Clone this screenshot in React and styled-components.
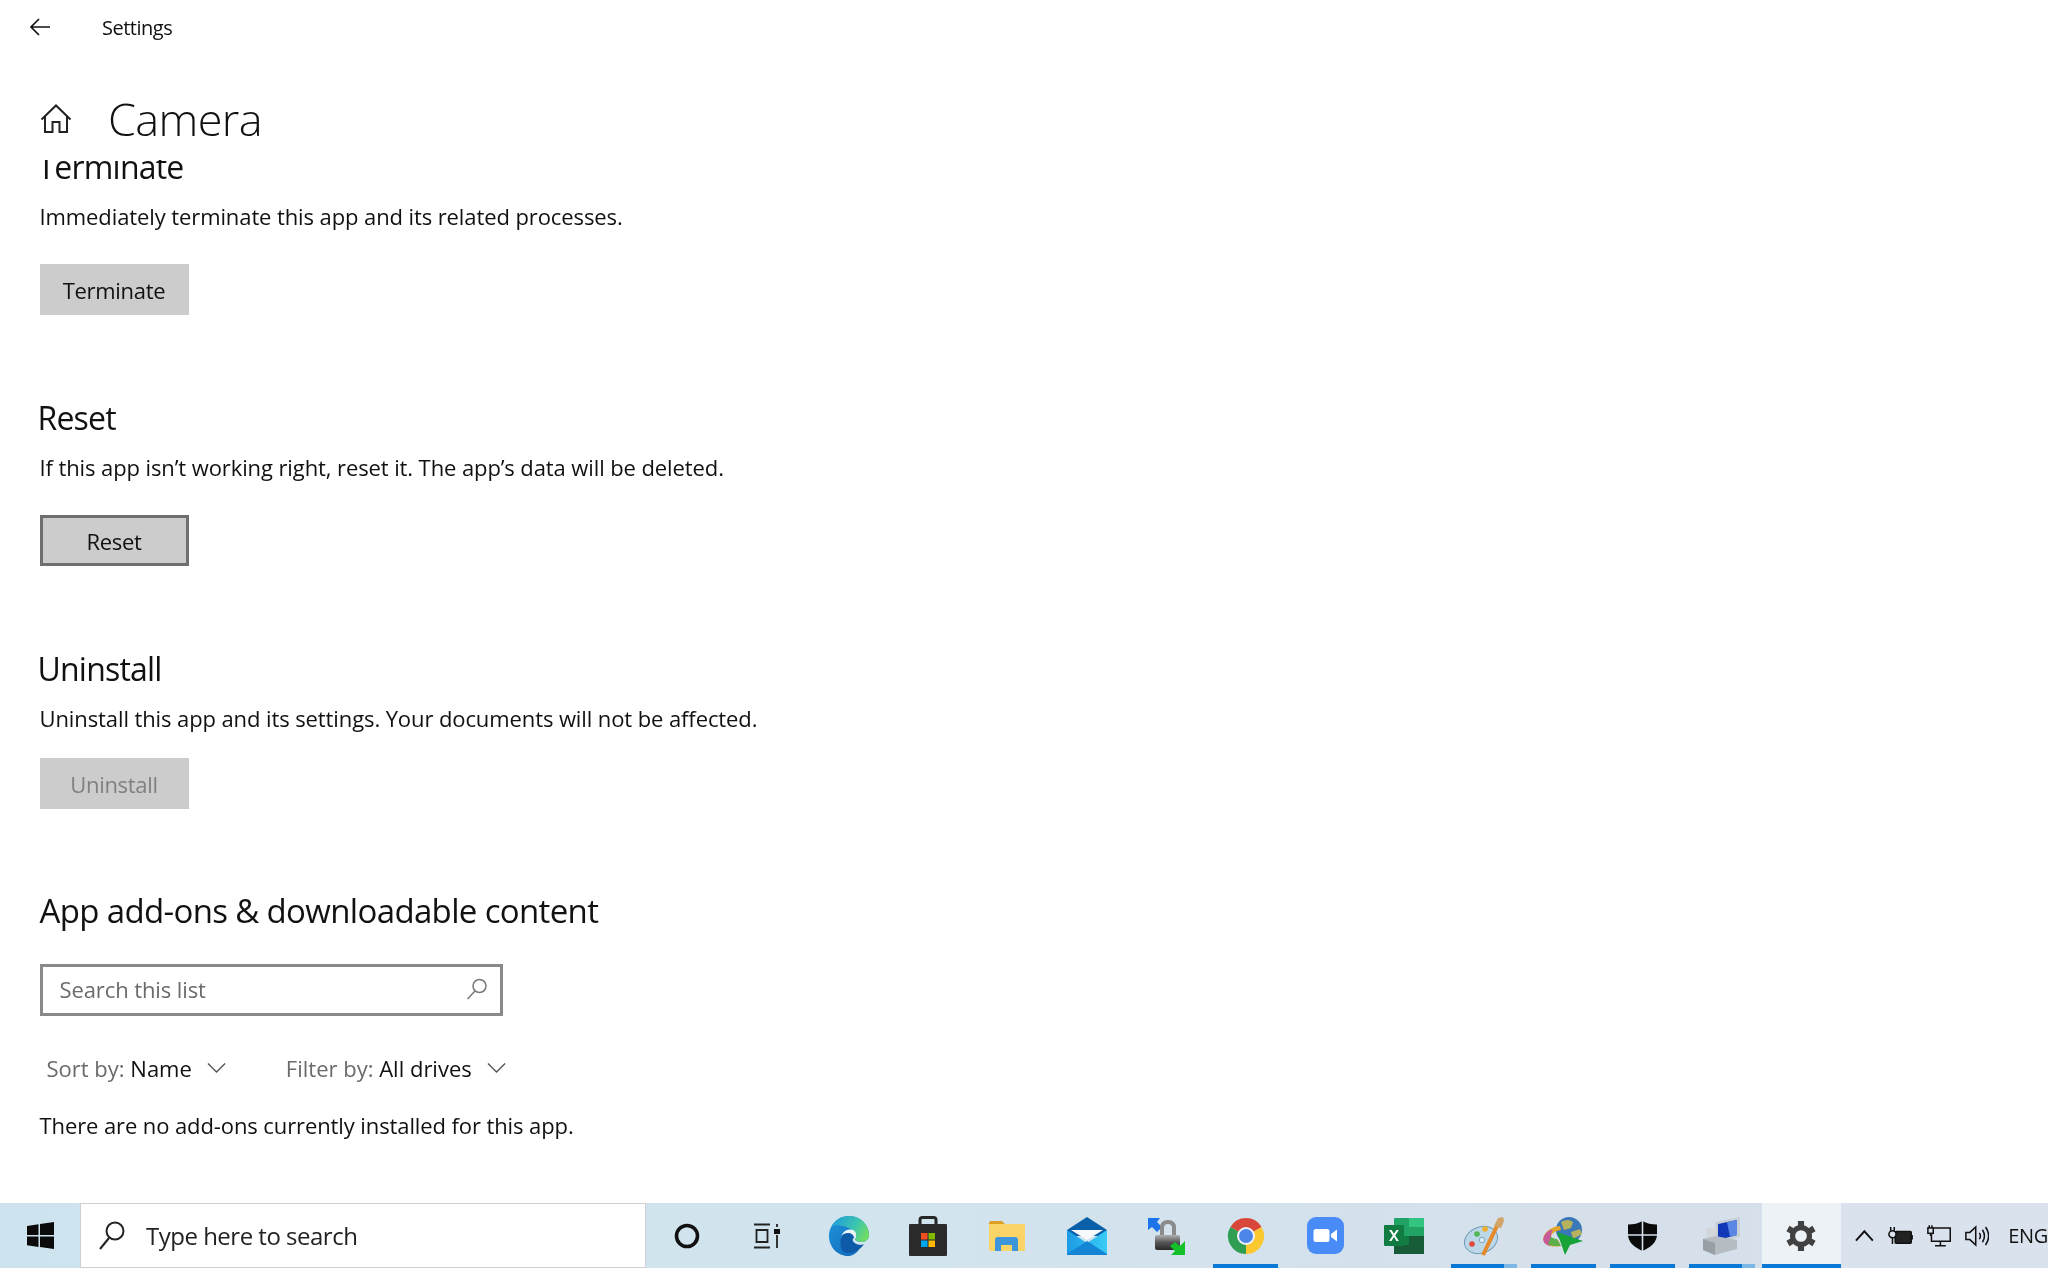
import React from 'react';
import styled, { createGlobalStyle } from 'styled-components';

const GlobalStyle = createGlobalStyle`
  html, body { margin: 0; padding: 0; background: #fff; }
  body { font-family: "Open Sans", "Noto Sans", sans-serif; color: #111; }
`;

const Page = styled.div`
  height: 1268px;
  display: flex;
  flex-direction: column;
  overflow: hidden;
  filter: blur(0.4px);
`;

const TitleBar = styled.div`
  height: 54px;
  display: flex;
  align-items: center;
  padding-left: 29px;
  gap: 51px;
  font-size: 20px;
  letter-spacing: -0.5px;
`;

const PageHeader = styled.div`
  height: 106px;
  box-sizing: border-box;
  display: flex;
  align-items: center;
  padding: 23px 0 0 40px;
  gap: 36px;
`;

const PageTitle = styled.h1`
  margin: 0;
  font-size: 45px;
  font-weight: 300;
  letter-spacing: -0.6px;
`;

const ScrollArea = styled.div`
  flex: 1;
  overflow: hidden;
  padding-left: 39.5px;
`;

const Sections = styled.div`
  margin-top: -18px;
`;

const Section = styled.section`
  height: 251px;
`;

const SectionTitle = styled.h2`
  margin: 0 0 0 -2px;
  height: 57px;
  line-height: 50px;
  font-size: 32px;
  font-weight: 400;
  letter-spacing: -0.8px;
`;

const Body = styled.p`
  margin: 0;
  line-height: 34px;
  font-size: 22px;
  letter-spacing: -0.1px;
`;

const Button = styled.div`
  margin-top: ${p => p.$top || 31}px;
  width: 149px;
  height: 51px;
  box-sizing: border-box;
  display: flex;
  align-items: center;
  justify-content: center;
  background: #ccc;
  border: ${p => (p.$focused ? '3px solid #6f6f6f' : 'none')};
  color: ${p => (p.$disabled ? '#808080' : '#111')};
  font-size: 22px;
  letter-spacing: -0.3px;
`;

const AddonsTitle = styled.h2`
  margin: -9px 0 0;
  height: 50px;
  line-height: 50px;
  font-size: 33px;
  font-weight: 400;
  letter-spacing: -0.65px;
`;

const SearchBox = styled.div`
  margin-top: 28px;
  width: 463px;
  height: 52px;
  box-sizing: border-box;
  border: 3px solid #8a8a8a;
  display: flex;
  align-items: center;
  justify-content: space-between;
  padding: 0 12px 2px 17px;
  color: #6b6b6b;
  font-size: 22px;
  letter-spacing: -0.1px;
`;

const FilterRow = styled.div`
  margin-top: 32px;
  height: 40px;
  display: flex;
  align-items: center;
  padding-left: 7px;
  gap: 60px;
`;

const Filter = styled.div`
  display: flex;
  align-items: center;
  font-size: 22px;
  letter-spacing: 0;
  color: #111;
  gap: 15px;
`;

const FilterLabel = styled.span`
  color: #6b6b6b;
`;

const EmptyNote = styled(Body)`
  margin-top: 20px;
`;

const Taskbar = styled.div`
  height: 65px;
  flex: none;
  display: flex;
  background: linear-gradient(90deg, #cde4ef 0%, #d2e4ee 45%, #d5e0eb 75%, #d8e0ec 100%);
`;

const StartTile = styled.div`
  width: 80px;
  display: flex;
  align-items: center;
  justify-content: center;
`;

const TaskSearch = styled.div`
  width: 566px;
  box-sizing: border-box;
  background: #fff;
  border: 1px solid #cfcfcf;
  display: flex;
  align-items: center;
  padding-left: 17px;
  gap: 21px;
  font-size: 24px;
  letter-spacing: -0.5px;
  color: #222;
`;

const ShellTile = styled.div`
  width: 80px;
  margin-left: ${p => (p.$first ? 1 : 0)}px;
  margin-right: ${p => (p.$first ? 0 : 2)}px;
  display: flex;
  align-items: center;
  justify-content: center;
`;

const AppTile = styled.div`
  position: relative;
  width: 79.4px;
  display: flex;
  align-items: center;
  justify-content: center;
  background: ${p => (p.$active ? '#edf2f7' : 'transparent')};
  &::after {
    content: '';
    display: ${p => (p.$running ? 'block' : 'none')};
    position: absolute;
    left: ${p => (p.$active ? 0 : 7)}px;
    right: ${p => (p.$active ? 0 : 7)}px;
    bottom: 0;
    height: 4px;
    background: ${p => (p.$stacked
      ? 'linear-gradient(90deg, #0a78d4 80%, #7db7e6 80%)'
      : '#0a78d4')};
  }
`;

const Tray = styled.div`
  flex: 1;
  display: flex;
  align-items: center;
  background: #dae2ee;
  padding-left: 14px;
  gap: 14px;
  overflow: hidden;
`;

const Lang = styled.span`
  font-size: 20px;
  letter-spacing: -0.3px;
  margin-left: 5px;
`;

const BackIcon = () => (
  <svg width="22" height="22" viewBox="0 0 22 22" fill="none" stroke="#111" strokeWidth="1.7">
    <path d="M21 11H2M10 3l-8 8 8 8" />
  </svg>
);

const HomeIcon = () => (
  <svg width="32" height="32" viewBox="0 0 32 32" fill="none" stroke="#222" strokeWidth="2">
    <path d="M1.5 16.5 16 2.5l14.5 14M5 13.5V29h7.5v-10h7v10H27V13.5" />
  </svg>
);

const ListSearchIcon = () => (
  <svg width="22" height="22" viewBox="0 0 22 22" fill="none" stroke="#777" strokeWidth="1.5">
    <circle cx="13.5" cy="8" r="6.5" />
    <path d="M9 13 1.5 21" />
  </svg>
);

const Chevron = () => (
  <svg width="19" height="11.400" viewBox="0 0 20 12" fill="none" stroke="#555" strokeWidth="1.5">
    <path d="m1 1.5 9 9 9-9" />
  </svg>
);

const WindowsLogo = () => (
  <svg width="27" height="27" viewBox="0 0 27 27" fill="#0b0b0b">
    <path d="M0 4l11.5-1.8V13H0zM13 2 27 0v13H13zM0 14.5h11.5v10.4L0 23.2zM13 14.5h14V27l-14-2z" />
  </svg>
);

const TaskSearchIcon = () => (
  <svg width="27" height="30" viewBox="0 0 27 30" fill="none" stroke="#222" strokeWidth="2">
    <circle cx="17" cy="10" r="8.500" />
    <path d="M11 17 2 28" />
  </svg>
);

const CortanaIcon = () => (
  <svg width="26" height="26" viewBox="0 0 26 26" fill="none" stroke="#111" strokeWidth="3.6">
    <circle cx="13" cy="13" r="10.5" />
  </svg>
);

const TaskViewIcon = () => (
  <svg width="28" height="26" viewBox="0 0 28 26" fill="none" stroke="#222" strokeWidth="1.8">
    <path d="M1 1.5h16M1 24.5h16M3.500 7h11v12h-11zM24 1v3M24 12v13" />
    <rect x="21" y="6" width="6" height="5" fill="#111" stroke="none" />
  </svg>
);

const EdgeIcon = () => (
  <svg width="40" height="40" viewBox="0 0 40 40">
    <defs>
      <linearGradient id="edgeTop" x1="0" y1="0.2" x2="1" y2="0.6">
        <stop offset="0" stopColor="#1f9fd8" />
        <stop offset="0.6" stopColor="#3cc4b0" />
        <stop offset="1" stopColor="#6fdc64" />
      </linearGradient>
      <linearGradient id="edgeBase" x1="0" y1="0" x2="1" y2="1">
        <stop offset="0" stopColor="#1f96dc" />
        <stop offset="1" stopColor="#0f62b4" />
      </linearGradient>
    </defs>
    <path d="M20 0C31 0 40 8.500 40 19c0 4-3 7-7.500 7-3 0-5.500-1-6.500-2.500 1-1 1.500-2.500 1-4-1.500-4-8-5-12-2.500-3 2-4 5.500-2 10 2 4.500 8 8 17 6.500C27 37.500 23.500 40 19 40 8.500 40 0 31 0 20 0 9 9 0 20 0z" fill="url(#edgeBase)" />
    <path d="M3 10C6 4 12 0 20 0c11 0 20 8.500 20 19 0 4-3 7-7.500 7-3 0-5.500-1-6.500-2.500 2-2 1.500-6-2.500-9C19 10.500 9 8 3 10z" fill="url(#edgeTop)" />
    <path d="M13 20c.5-4 4-6.500 8-6.500 3 0 5.500 1.500 6 4 .3 1.500-.5 3-1.500 4-.5-3-3-4.500-6-4.500-2.500 0-5 1-6.500 3z" fill="#eaf6f6" />
    <path d="M12.500 20c1.500-2 4-3 6.500-3 3 0 5.500 1.500 6 4.500-1.500 1.500-2 3 0 5 3 2.500 7 3 10 1.500-3 5-9 9-15 9-3 0-5-1-6-2-3-3-3-10.500-1.500-15z" fill="#0c5aa8" />
  </svg>
);

const StoreIcon = () => (
  <svg width="38" height="40" viewBox="0 0 38 40">
    <path d="M11 10V4q0-2.500 2.500-2.500h11Q27 1.500 27 4v6" fill="none" stroke="#262626" strokeWidth="3" />
    <rect x="0" y="8" width="38" height="32" rx="1" fill="#2a2a2a" />
    <rect x="12" y="17" width="6.500" height="6.500" fill="#f25022" />
    <rect x="19.500" y="17" width="6.500" height="6.500" fill="#7fba00" />
    <rect x="12" y="24.500" width="6.500" height="6.500" fill="#00a4ef" />
    <rect x="19.500" y="24.500" width="6.500" height="6.500" fill="#ffb900" />
  </svg>
);

const FolderIcon = () => (
  <svg width="36" height="30" viewBox="0 0 36 30">
    <path d="M0 2q0-2 2-2h11l3 3v3H0z" fill="#dca124" />
    <rect x="0" y="3" width="36" height="27" rx="1" fill="#fbd468" />
    <path d="M6 30V19q0-3 3-3h17q3 0 3 3v11h-6v-6H12v6z" fill="#3e96da" />
  </svg>
);

const MailIcon = () => (
  <svg width="40" height="38" viewBox="0 0 40 38">
    <defs>
      <linearGradient id="mailBody" x1="0" y1="0" x2="1" y2="0">
        <stop offset="0" stopColor="#1c9be4" />
        <stop offset="1" stopColor="#3accf6" />
      </linearGradient>
    </defs>
    <path d="M0 13 20 0l20 13v6H0z" fill="#0a5fa9" />
    <path d="M4 13h32L20 23z" fill="#f6f8fa" />
    <path d="M0 13l20 13 20-13v25H0z" fill="url(#mailBody)" />
    <path d="M0 38v-1l20-13 20 13v1z" fill="#1385d4" />
  </svg>
);

const LockIcon = () => (
  <svg width="38" height="38" viewBox="0 0 38 38">
    <defs>
      <linearGradient id="lockBody" x1="0" y1="0" x2="0" y2="1">
        <stop offset="0" stopColor="#b0b0b0" />
        <stop offset="0.5" stopColor="#555" />
        <stop offset="1" stopColor="#2b2b2b" />
      </linearGradient>
    </defs>
    <path d="M1 1h12l-3 4 5 5-5 5-5-5-4 3z" fill="#1c74ea" />
    <path d="M15 19v-8q0-6 6-6t6 6v8" fill="none" stroke="#8b8b8b" strokeWidth="4" />
    <rect x="8" y="18" width="25" height="15" rx="2" fill="url(#lockBody)" />
    <path d="M38 24v14H24l4-4-5-5 5-4 5 4z" fill="#12c02a" />
  </svg>
);

const ChromeIcon = () => (
  <svg width="38" height="38" viewBox="0 0 38 38">
    <path d="M19 19 3.400 10A18 18 0 0 1 34.600 10z" fill="#d9473a" />
    <path d="M19 19 34.600 10A18 18 0 0 1 19 37z" fill="#fbc830" />
    <path d="M19 19 19 37A18 18 0 0 1 3.400 10z" fill="#2f9e52" />
    <circle cx="19" cy="19" r="9" fill="#eef3f8" />
    <circle cx="19" cy="19" r="7" fill="#4c86e8" />
  </svg>
);

const ZoomIcon = () => (
  <svg width="37" height="37" viewBox="0 0 37 37">
    <rect width="37" height="37" rx="9" fill="#4a8cf7" />
    <rect x="6.500" y="12" width="16" height="13" rx="2.500" fill="#fff" />
    <path d="m24 17 6-4.500v12L24 20z" fill="#fff" />
  </svg>
);

const ExcelIcon = () => (
  <svg width="40" height="36" viewBox="0 0 40 36">
    <rect x="10" y="0" width="30" height="36" rx="1" fill="#21a366" />
    <rect x="25" y="0" width="15" height="9" fill="#33c481" />
    <rect x="10" y="18" width="15" height="9" fill="#107c41" />
    <rect x="25" y="18" width="15" height="9" fill="#185c37" />
    <rect x="10" y="27" width="30" height="9" fill="#185c37" />
    <rect x="0" y="7" width="20" height="21" rx="1" fill="#107c41" />
    <path d="m5 12 2.500.1 2.500 3.700 2.500-3.800h2.300l-3.600 5.400 3.700 5.600h-2.500L10 19l-2.600 4H5l3.800-5.600z" fill="#fff" />
  </svg>
);

const PaintIcon = () => (
  <svg width="40" height="40" viewBox="0 0 40 40">
    <ellipse cx="17" cy="24" rx="17" ry="13" transform="rotate(-22 17 24)" fill="#bcd7e8" stroke="#6f9db8" />
    <circle cx="8" cy="28" r="2.800" fill="#e2473c" />
    <circle cx="13" cy="18" r="2.800" fill="#4fb552" />
    <circle cx="21" cy="13" r="2.800" fill="#eeb02a" />
    <circle cx="18" cy="24" r="2.800" fill="#dcebf3" stroke="#7fa4ba" />
    <path d="M19 39 33 10" stroke="#e58a2b" strokeWidth="4" />
    <path d="m30 10 4-8 5-1 1 4-3 7z" fill="#d2a468" />
  </svg>
);

const IdmIcon = () => (
  <svg width="40" height="38" viewBox="0 0 40 38">
    <circle cx="26" cy="13" r="13" fill="#3a78b8" />
    <path d="M18 5q7-4 12 0l-2 6-7 2zM28 15l9-3 2 5-9 5z" fill="#b8b25c" />
    <path d="M17 9C5 10-2 19 1 25c3 5 11 5 17 4l-3-6c-4 1-7 0-7-3 0-3 4-6 10-7z" fill="#e3a52a" />
    <path d="M7 13C1 17-1 22 1 25c1 2 3 3 6 4l1-9c0-2 0-4 2-7z" fill="#c75a9a" />
    <path d="M14 22c-2 0-4-1-6-2l-3 7c3 2 8 2 13 2z" fill="#5cb04a" />
    <path d="M14 15 40 24 27 28 22 38z" fill="#17a238" />
  </svg>
);

const ShieldIcon = () => (
  <svg width="29" height="30" viewBox="0 0 29 30">
    <path d="M14.500 0q6 3.500 14.500 3.500v10q0 10-14.500 16.500Q0 23.500 0 13.500v-10Q8.500 3.500 14.500 0z" fill="#0a0a0a" />
    <path d="M14.500 0v30M0 14h29" stroke="#d5e0eb" strokeWidth="1.600" />
  </svg>
);

const PcIcon = () => (
  <svg width="38" height="38" viewBox="0 0 38 38">
    <path d="M12 5 37 0v20L12 27z" fill="#c8d0d6" />
    <path d="M15 7 34 3v15l-19 5z" fill="#1038b8" />
    <path d="M24 5l10-2v15l-7 2z" fill="#5a86e4" />
    <path d="M0 22 12 19l22 4v9l-22 6L0 33z" fill="#b6bdc2" />
    <path d="M12 26 0 22v11l12 5z" fill="#98a0a5" />
    <path d="M3 12 13 10v8L3 21z" fill="#d3d7da" />
  </svg>
);

const GearIcon = () => (
  <svg width="30" height="30" viewBox="0 0 32 32" fill="none" stroke="#414141">
    <circle cx="16" cy="16" r="9" strokeWidth="5.500" />
    <path d="M16 0v6M16 26v6M2.100 8l5.200 3M24.700 21l5.200 3M2.100 24l5.200-3M24.700 11l5.200-3" strokeWidth="6.500" />
  </svg>
);

const ChevronUp = () => (
  <svg width="21" height="13" viewBox="0 0 20 13" fill="none" stroke="#111" strokeWidth="2">
    <path d="m1 12 9-10 9 10" />
  </svg>
);

const PowerIcon = () => (
  <svg width="28" height="20" viewBox="0 0 28 20" fill="none" stroke="#111" strokeWidth="1.700">
    <rect x="8" y="5" width="18" height="13" rx="1" fill="#222" />
    <path d="M27 9v5" />
    <circle cx="5" cy="8" r="4" fill="#dae2ee" />
    <path d="M3 0v4M7 0v4M5 12v7" />
  </svg>
);

const NetworkIcon = () => (
  <svg width="27" height="24" viewBox="0 0 27 24" fill="none" stroke="#111" strokeWidth="1.700">
    <path d="M7 3h19v15H5v-8M15 18v5M9 23h12" />
    <rect x="1" y="3" width="6" height="6" />
    <path d="M2.500 0v3M5.500 0v3M4 9v3" />
  </svg>
);

const SoundIcon = () => (
  <svg width="27" height="24" viewBox="0 0 27 24" fill="none" stroke="#111" strokeWidth="1.700">
    <path d="M1 8h4.500L12 2v20l-6.500-6H1zM16 8.500q2.500 3.500 0 7M19.500 5q4.500 7 0 14M23 2q7 10 0 20" />
  </svg>
);

const apps = [
  { key: 'edge', icon: <EdgeIcon /> },
  { key: 'store', icon: <StoreIcon /> },
  { key: 'folder', icon: <FolderIcon /> },
  { key: 'mail', icon: <MailIcon /> },
  { key: 'lock', icon: <LockIcon /> },
  { key: 'chrome', icon: <ChromeIcon />, running: true },
  { key: 'zoom', icon: <ZoomIcon /> },
  { key: 'excel', icon: <ExcelIcon /> },
  { key: 'paint', icon: <PaintIcon />, running: true, stacked: true },
  { key: 'idm', icon: <IdmIcon />, running: true },
  { key: 'shield', icon: <ShieldIcon />, running: true },
  { key: 'pc', icon: <PcIcon />, running: true, stacked: true },
  { key: 'gear', icon: <GearIcon />, running: true, active: true },
];

const sections = [
  { title: 'Terminate', text: 'Immediately terminate this app and its related processes.', button: 'Terminate' },
  { title: 'Reset', text: 'If this app isn\u2019t working right, reset it. The app\u2019s data will be deleted.', button: 'Reset', focused: true },
  { title: 'Uninstall', text: 'Uninstall this app and its settings. Your documents will not be affected.', button: 'Uninstall', disabled: true, top: 23 },
];

export default function App() {
  return (
    <Page>
      <GlobalStyle />
      <TitleBar>
        <BackIcon />
        <span>Settings</span>
      </TitleBar>
      <PageHeader>
        <HomeIcon />
        <PageTitle>Camera</PageTitle>
      </PageHeader>
      <ScrollArea>
        <Sections>
          {sections.map(s => (
            <Section key={s.title}>
              <SectionTitle>{s.title}</SectionTitle>
              <Body>{s.text}</Body>
              <Button $focused={s.focused} $disabled={s.disabled} $top={s.top}>{s.button}</Button>
            </Section>
          ))}
          <AddonsTitle>App add-ons &amp; downloadable content</AddonsTitle>
          <SearchBox>
            <span>Search this list</span>
            <ListSearchIcon />
          </SearchBox>
          <FilterRow>
            <Filter><span><FilterLabel>Sort by:</FilterLabel> Name</span><Chevron /></Filter>
            <Filter><span><FilterLabel>Filter by:</FilterLabel> All drives</span><Chevron /></Filter>
          </FilterRow>
          <EmptyNote>There are no add-ons currently installed for this app.</EmptyNote>
        </Sections>
      </ScrollArea>
      <Taskbar>
        <StartTile><WindowsLogo /></StartTile>
        <TaskSearch>
          <TaskSearchIcon />
          Type here to search
        </TaskSearch>
        <ShellTile $first><CortanaIcon /></ShellTile>
        <ShellTile><TaskViewIcon /></ShellTile>
        {apps.map(a => (
          <AppTile key={a.key} $running={a.running} $stacked={a.stacked} $active={a.active}>{a.icon}</AppTile>
        ))}
        <Tray>
          <ChevronUp />
          <PowerIcon />
          <NetworkIcon />
          <SoundIcon />
          <Lang>ENG</Lang>
        </Tray>
      </Taskbar>
    </Page>
  );
}
